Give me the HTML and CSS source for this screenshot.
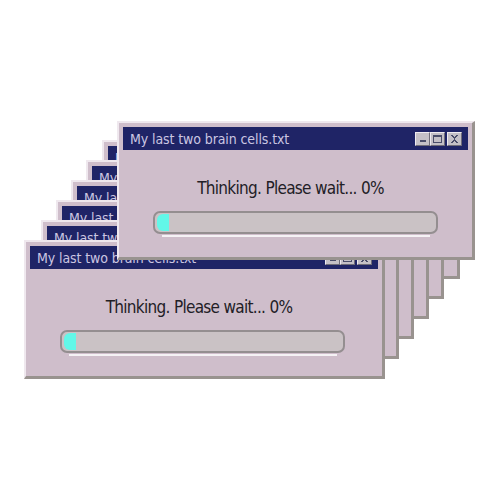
FILE: index.html
```html
<!DOCTYPE html>
<html>
<head>
<meta charset="utf-8">
<link rel="stylesheet" href="styles.css">
</head>
<body>
<div class="desk">
  <div class="win w5"><div class="titlebar"><span class="title">My last two brain cells.txt</span><div class="btns"><span class="btn"><i class="g-min"></i></span><span class="btn"><i class="g-max"></i></span><span class="btn close"><svg width="9" height="8" viewBox="0 0 9 8"><path d="M1 0h2v1h1v1h1V1h1V0h2v1h-1v1H6v1H5v2h1v1h1v1h1v1H6V7H5V6H4v1H3v1H1V7h1V6h1V5h1V3H3V2H2V1H1z" fill="#4a4d6a"/></svg></span></div></div><div class="body"><p class="msg">Thinking. Please wait... 0%</p><div class="bar"><div class="fill"></div></div><div class="shine"></div></div></div>
  <div class="win w4"><div class="titlebar"><span class="title">My last two brain cells.txt</span><div class="btns"><span class="btn"><i class="g-min"></i></span><span class="btn"><i class="g-max"></i></span><span class="btn close"><svg width="9" height="8" viewBox="0 0 9 8"><path d="M1 0h2v1h1v1h1V1h1V0h2v1h-1v1H6v1H5v2h1v1h1v1h1v1H6V7H5V6H4v1H3v1H1V7h1V6h1V5h1V3H3V2H2V1H1z" fill="#4a4d6a"/></svg></span></div></div><div class="body"><p class="msg">Thinking. Please wait... 0%</p><div class="bar"><div class="fill"></div></div><div class="shine"></div></div></div>
  <div class="win w3"><div class="titlebar"><span class="title">My last two brain cells.txt</span><div class="btns"><span class="btn"><i class="g-min"></i></span><span class="btn"><i class="g-max"></i></span><span class="btn close"><svg width="9" height="8" viewBox="0 0 9 8"><path d="M1 0h2v1h1v1h1V1h1V0h2v1h-1v1H6v1H5v2h1v1h1v1h1v1H6V7H5V6H4v1H3v1H1V7h1V6h1V5h1V3H3V2H2V1H1z" fill="#4a4d6a"/></svg></span></div></div><div class="body"><p class="msg">Thinking. Please wait... 0%</p><div class="bar"><div class="fill"></div></div><div class="shine"></div></div></div>
  <div class="win w2"><div class="titlebar"><span class="title">My last two brain cells.txt</span><div class="btns"><span class="btn"><i class="g-min"></i></span><span class="btn"><i class="g-max"></i></span><span class="btn close"><svg width="9" height="8" viewBox="0 0 9 8"><path d="M1 0h2v1h1v1h1V1h1V0h2v1h-1v1H6v1H5v2h1v1h1v1h1v1H6V7H5V6H4v1H3v1H1V7h1V6h1V5h1V3H3V2H2V1H1z" fill="#4a4d6a"/></svg></span></div></div><div class="body"><p class="msg">Thinking. Please wait... 0%</p><div class="bar"><div class="fill"></div></div><div class="shine"></div></div></div>
  <div class="win w1"><div class="titlebar"><span class="title">My last two brain cells.txt</span><div class="btns"><span class="btn"><i class="g-min"></i></span><span class="btn"><i class="g-max"></i></span><span class="btn close"><svg width="9" height="8" viewBox="0 0 9 8"><path d="M1 0h2v1h1v1h1V1h1V0h2v1h-1v1H6v1H5v2h1v1h1v1h1v1H6V7H5V6H4v1H3v1H1V7h1V6h1V5h1V3H3V2H2V1H1z" fill="#4a4d6a"/></svg></span></div></div><div class="body"><p class="msg">Thinking. Please wait... 0%</p><div class="bar"><div class="fill"></div></div><div class="shine"></div></div></div>
  <div class="win w0"><div class="titlebar"><span class="title">My last two brain cells.txt</span><div class="btns"><span class="btn"><i class="g-min"></i></span><span class="btn"><i class="g-max"></i></span><span class="btn close"><svg width="9" height="8" viewBox="0 0 9 8"><path d="M1 0h2v1h1v1h1V1h1V0h2v1h-1v1H6v1H5v2h1v1h1v1h1v1H6V7H5V6H4v1H3v1H1V7h1V6h1V5h1V3H3V2H2V1H1z" fill="#4a4d6a"/></svg></span></div></div><div class="body"><p class="msg">Thinking. Please wait... 0%</p><div class="bar"><div class="fill"></div></div><div class="shine"></div></div></div>
  <div class="win w6"><div class="titlebar"><span class="title">My last two brain cells.txt</span><div class="btns"><span class="btn"><i class="g-min"></i></span><span class="btn"><i class="g-max"></i></span><span class="btn close"><svg width="9" height="8" viewBox="0 0 9 8"><path d="M1 0h2v1h1v1h1V1h1V0h2v1h-1v1H6v1H5v2h1v1h1v1h1v1H6V7H5V6H4v1H3v1H1V7h1V6h1V5h1V3H3V2H2V1H1z" fill="#4a4d6a"/></svg></span></div></div><div class="body"><p class="msg">Thinking. Please wait... 0%</p><div class="bar"><div class="fill"></div></div><div class="shine"></div></div></div>
</div>
</body>
</html>
```

FILE: styles.css
```css
html, body {
  margin: 0;
  padding: 0;
  background: #ffffff;
}
.desk {
  position: relative;
  width: 500px;
  height: 500px;
  overflow: hidden;
  font-family: "DejaVu Sans Condensed", "DejaVu Sans", sans-serif;
  font-stretch: condensed;
}
.win {
  position: absolute;
  box-sizing: border-box;
  width: 358px;
  height: 139px;
  background: #cfbecb;
  border-top: 2px solid #efe8ee;
  border-left: 2px solid #efe8ee;
  border-right: 3px solid #99938f;
  border-bottom: 3px solid #99938f;
  display: flex;
  flex-direction: column;
}
.w0 { left: 24px; top: 240px; width: 361px; z-index: 6; }
.w1 { left: 41px; top: 220px; z-index: 5; }
.w2 { left: 56px; top: 200px; z-index: 4; }
.w3 { left: 71px; top: 180px; z-index: 3; }
.w4 { left: 86px; top: 160px; z-index: 2; }
.w5 { left: 102px; top: 140px; z-index: 1; }
.w6 { left: 117px; top: 121px; z-index: 7; }

.titlebar {
  margin: 4px 4px 0 4px;
  height: 23px;
  background: #1f2466;
  display: flex;
  align-items: center;
  justify-content: space-between;
  padding: 0 6px 0 7px;
}
.title {
  color: #cbc6e2;
  font-size: 14px;
  letter-spacing: -0.1px;
}
.btns {
  display: flex;
  gap: 0;
}
.btn {
  box-sizing: border-box;
  width: 15px;
  height: 14px;
  background: #c4c0c6;
  border-top: 1px solid #eeeaf0;
  border-left: 1px solid #eeeaf0;
  border-right: 1px solid #6f6c78;
  border-bottom: 1px solid #6f6c78;
  display: flex;
  align-items: center;
  justify-content: center;
}
.btn.close { margin-left: 2px; }
.g-min {
  display: block;
  width: 6px;
  height: 2px;
  background: #4a4d6a;
  margin-top: 5px;
}
.g-max {
  display: block;
  box-sizing: border-box;
  width: 9px;
  height: 8px;
  border: 1px solid #4a4d6a;
  border-top-width: 2px;
}
.body {
  display: flex;
  flex-direction: column;
  align-items: flex-start;
}
.msg {
  margin: 27px 0 0 0;
  align-self: center;
  font-size: 17px;
  line-height: 22px;
  color: #222026;
  letter-spacing: -0.7px;
  padding-right: 10px;
}
.bar {
  margin: 12px 0 0 34px;
  box-sizing: border-box;
  width: 285px;
  height: 23px;
  border: 2px solid #948e90;
  border-radius: 7px;
  background: #cac2c5;
  padding: 1px 2px;
  display: flex;
}
.fill {
  width: 12px;
  height: 17px;
  background: #62f7e8;
  border-radius: 6px 0 0 6px;
}
.shine {
  margin: 1px 0 0 43px;
  width: 268px;
  height: 2px;
  background: #f5f2f5;
}
```
